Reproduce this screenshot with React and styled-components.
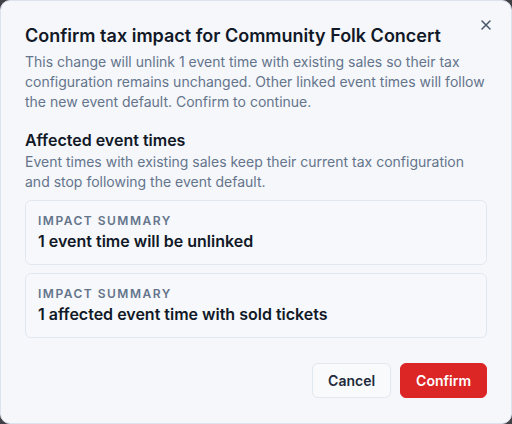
import React from "react";
import styled, { createGlobalStyle } from "styled-components";

const GlobalStyle = createGlobalStyle`
  * {
    box-sizing: border-box;
  }
  html, body {
    margin: 0;
    padding: 0;
    height: 100%;
    background: #3f4147;
    font-family: Inter, "Noto Sans", sans-serif;
  }
  #root {
    height: 100%;
  }
`;

const Dialog = styled.div`
  position: relative;
  height: 100vh;
  width: 100%;
  background: #f5f7fb;
  border: 1px solid #dde3ec;
  border-radius: 10px;
  padding: 21px 24px 24px;
  display: flex;
  flex-direction: column;
`;

const CloseBtn = styled.button`
  position: absolute;
  top: 15px;
  right: 16px;
  width: 18px;
  height: 18px;
  padding: 0;
  border: none;
  background: transparent;
  color: #475569;
  display: flex;
  align-items: center;
  justify-content: center;
  cursor: pointer;
`;

const Title = styled.h2`
  margin: 0 0 2px;
  font-size: 18px;
  line-height: 28px;
  font-weight: 600;
  color: #111827;
`;

const Text = styled.p`
  margin: 0;
  font-size: 14px;
  line-height: 20px;
  color: #64748b;
`;

const Section = styled.div`
  margin-top: 16px;
  display: flex;
  flex-direction: column;
`;

const SectionTitle = styled.h3`
  margin: 0;
  font-size: 16px;
  line-height: 24px;
  font-weight: 600;
  color: #111827;
`;

const CardList = styled.div`
  margin-top: 8px;
  display: flex;
  flex-direction: column;
  gap: 8px;
`;

const Card = styled.div`
  border: 1px solid #e2e8f0;
  border-radius: 6px;
  background: #f6f8fb;
  padding: 12px 12px 11px;
`;

const CardLabel = styled.div`
  font-size: 12px;
  line-height: 16px;
  font-weight: 600;
  letter-spacing: 1.5px;
  text-transform: uppercase;
  color: #64748b;
`;

const CardValue = styled.div`
  font-size: 16px;
  line-height: 24px;
  font-weight: 600;
  color: #111827;
`;

const Footer = styled.div`
  margin-top: 25px;
  display: flex;
  justify-content: flex-end;
  gap: 9px;
`;

const Button = styled.button`
  height: 35px;
  padding: 0 15px;
  border-radius: 6px;
  font-family: inherit;
  font-size: 14px;
  font-weight: 600;
  cursor: pointer;
  border: 1px solid ${(p) => (p.$danger ? "#dc2626" : "#e2e8f0")};
  background: ${(p) => (p.$danger ? "#dc2626" : "#f8fafc")};
  color: ${(p) => (p.$danger ? "#ffffff" : "#1e293b")};
`;

const summaries = [
  "1 event time will be unlinked",
  "1 affected event time with sold tickets",
];

export default function App() {
  return (
    <>
      <GlobalStyle />
      <Dialog role="dialog">
        <CloseBtn aria-label="Close">
          <svg width="12" height="12" viewBox="0 0 12 12" fill="none">
            <path
              d="M2 2l8 8M10 2l-8 8"
              stroke="currentColor"
              strokeWidth="1.5"
              strokeLinecap="round"
            />
          </svg>
        </CloseBtn>
        <Title>Confirm tax impact for Community Folk Concert</Title>
        <Text>
          This change will unlink 1 event time with existing sales so their tax
          configuration remains unchanged. Other linked event times will follow
          the new event default. Confirm to continue.
        </Text>
        <Section>
          <SectionTitle>Affected event times</SectionTitle>
          <Text>
            Event times with existing sales keep their current tax configuration
            and stop following the event default.
          </Text>
          <CardList>
            {summaries.map((s) => (
              <Card key={s}>
                <CardLabel>Impact summary</CardLabel>
                <CardValue>{s}</CardValue>
              </Card>
            ))}
          </CardList>
        </Section>
        <Footer>
          <Button>Cancel</Button>
          <Button $danger>Confirm</Button>
        </Footer>
      </Dialog>
    </>
  );
}
